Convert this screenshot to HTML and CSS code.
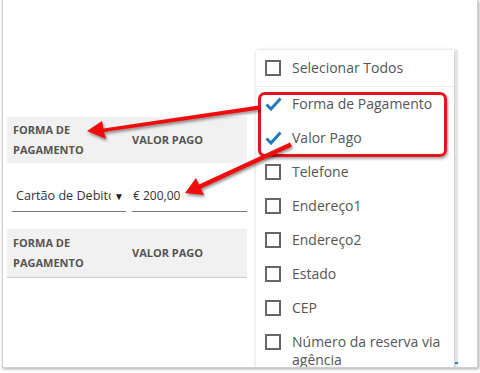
FILE: index.html
```html
<!DOCTYPE html>
<html lang="pt">
<head>
  <meta charset="UTF-8" />
  <title>Colunas</title>
  <link rel="stylesheet" href="styles.css">
</head>
<body>

<div class="frame">
  <div class="grid-area">
    <div class="head-row">
      <div class="col col-forma">FORMA DE<br>PAGAMENTO</div>
      <div class="col col-valor">VALOR PAGO</div>
    </div>
    <div class="edit-row">
      <div class="field field-select">
        <span class="select-text">Cartão de Debito</span>
        <span class="caret">&#9660;</span>
      </div>
      <div class="field field-value">€ 200,00</div>
    </div>
    <div class="head-row head-row-2">
      <div class="col col-forma">FORMA DE<br>PAGAMENTO</div>
      <div class="col col-valor">VALOR PAGO</div>
    </div>
  </div>

  <!-- column chooser menu -->
  <div class="menu">
    <div class="item item-all"><span class="box"></span><span class="label">Selecionar Todos</span></div>
    <div class="item"><span class="tick"><svg width="17" height="14" viewBox="0 0 17 14"><path d="M1.5 7.5 L6 12 L15.5 1.5" fill="none" stroke="#1f7bc1" stroke-width="3"/></svg></span><span class="label">Forma de Pagamento</span></div>
    <div class="item"><span class="tick"><svg width="17" height="14" viewBox="0 0 17 14"><path d="M1.5 7.5 L6 12 L15.5 1.5" fill="none" stroke="#1f7bc1" stroke-width="3"/></svg></span><span class="label">Valor Pago</span></div>
    <div class="item"><span class="box"></span><span class="label">Telefone</span></div>
    <div class="item"><span class="box"></span><span class="label">Endereço1</span></div>
    <div class="item"><span class="box"></span><span class="label">Endereço2</span></div>
    <div class="item"><span class="box"></span><span class="label">Estado</span></div>
    <div class="item"><span class="box"></span><span class="label">CEP</span></div>
    <div class="item"><span class="box"></span><span class="label">Número da reserva via agência</span></div>
  </div>
  <div class="scroll-track"><span class="scroll-thumb"></span></div>

  <!-- annotations -->
  <div class="highlight"></div>
  <svg class="arrows" width="480" height="373" viewBox="0 0 480 373">
    <defs>
      <filter id="sh" x="-10%" y="-10%" width="130%" height="140%">
        <feDropShadow dx="1" dy="2" stdDeviation="1.5" flood-color="#000" flood-opacity="0.45"/>
      </filter>
    </defs>
    <g fill="#ee0a0a" stroke="none" filter="url(#sh)">
      <path d="M258 105.5 L259 109.5 L103 132 L105 139 L86 131 L101 121 L102.5 128.5 Z"/>
      <path d="M289 142.5 L291 146.5 L200 188.5 L203 195 L184 193 L195 178 L198 184.5 Z"/>
    </g>
  </svg>
</div>

</body>
</html>
```

FILE: styles.css
```css
* { box-sizing: border-box; margin: 0; padding: 0; }
body {
  font-family: "Open Sans", "Liberation Sans", sans-serif;
  background: #fff;
  width: 480px;
  height: 373px;
  overflow: hidden;
}
.frame {
  position: relative;
  margin-left: 2px;
  width: 476px;
  height: 368px;
  background: #fff;
  border: 1px solid #cfcfcf;
  border-top: none;
  box-shadow: 1px 1px 3px rgba(0,0,0,0.35);
  overflow: hidden;
}
.grid-area {
  padding: 117px 0 0 4px;
  width: 244px;
}
.head-row {
  display: flex;
  align-items: center;
  background: #f1f1f1;
  height: 46px;
  font-size: 11px;
  font-weight: bold;
  color: #555;
  line-height: 20px;
}
.head-row-2 {
  height: 49px;
  border-bottom: 1px solid #cdcdcd;
}
.col-forma {
  width: 125px;
  padding-left: 6px;
}
.edit-row {
  display: flex;
  padding: 24px 0 17px 5px;
  font-size: 12px;
  color: #333;
}
.field {
  border-bottom: 1px solid #777;
  height: 25px;
  line-height: 18px;
}
.field-select {
  display: flex;
  width: 114px;
  padding-left: 4px;
  margin-right: 6px;
}
.select-text {
  width: 95px;
  font-size: 12.6px;
  overflow: hidden;
  white-space: nowrap;
}
.caret {
  font-size: 10px;
  margin-left: 3px;
  color: #222;
}
.field-value {
  flex: 1;
  padding-left: 1px;
}
.menu {
  position: absolute;
  left: 253px;
  top: 50px;
  width: 198px;
  height: 340px;
  background: #fff;
  box-shadow: 1px 1px 4px rgba(0,0,0,0.3);
  font-size: 14px;
  color: #555;
}
.item {
  display: flex;
  align-items: flex-start;
  padding: 8px 6px 8px 9px;
  line-height: 18px;
  height: 34px;
}
.item:last-child {
  height: auto;
}
.item-all {
  height: 37px;
  padding-top: 9px;
  border-bottom: 1px solid #eee;
}
.box {
  flex: none;
  width: 16px;
  height: 16px;
  border: 2px solid #666;
  margin: 1px 11px 0 0;
}
.tick {
  flex: none;
  width: 16px;
  margin: 2px 11px 0 0;
}
.label {
  width: 152px;
}
.scroll-track {
  position: absolute;
  left: 452px;
  top: 50px;
  width: 3px;
  height: 314px;
  background: #e4e4e4;
}
.scroll-thumb {
  position: absolute;
  bottom: 0;
  left: 0;
  width: 3px;
  height: 2px;
  background: #2a7fc4;
}
.highlight {
  position: absolute;
  left: 255px;
  top: 92px;
  width: 189px;
  height: 65px;
  border: 3px solid #e5131b;
  border-radius: 7px;
  box-shadow: 1px 2px 3px rgba(0,0,0,0.35);
}
.arrows {
  position: absolute;
  left: -2px;
  top: 0;
}
```
